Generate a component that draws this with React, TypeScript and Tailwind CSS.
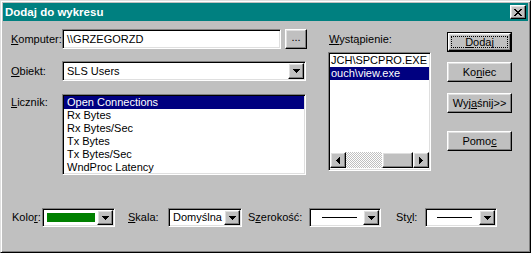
import React from "react";

const sunken =
	"border border-t-[#808080] border-l-[#808080] border-r-white border-b-white shadow-[inset_1px_1px_0_#000,inset_-1px_-1px_0_#dfdfdf]";
const raised =
	"border border-t-white border-l-white border-r-black border-b-black shadow-[inset_-1px_-1px_0_#808080,inset_1px_1px_0_#dfdfdf]";

function DownArrow() {
	return (
		<svg width="7" height="4" viewBox="0 0 7 4" shapeRendering="crispEdges">
			<path d="M0 0h7v1h-1v1h-1v1h-1v1h-1v-1h-1v-1h-1v-1h-1z" fill="#000" />
		</svg>
	);
}

function LeftArrow() {
	return (
		<svg width="4" height="7" viewBox="0 0 4 7" shapeRendering="crispEdges">
			<path d="M0 3h1v-1h1v-1h1v-1h1v7h-1v-1h-1v-1h-1v-1h-1z" fill="#000" />
		</svg>
	);
}

function RightArrow() {
	return (
		<svg width="4" height="7" viewBox="0 0 4 7" shapeRendering="crispEdges">
			<path d="M0 0h1v1h1v1h1v1h1v1h-1v1h-1v1h-1v1h-1z" fill="#000" />
		</svg>
	);
}

function CloseGlyph() {
	// piksele krzyżyka w stylu Win95
	const rows: [number, number][][] = [
		[[0, 2], [6, 2]],
		[[1, 2], [5, 2]],
		[[2, 4]],
		[[3, 2]],
		[[2, 4]],
		[[1, 2], [5, 2]],
		[[0, 2], [6, 2]],
	];
	return (
		<svg width="8" height="7" viewBox="0 0 8 7" shapeRendering="crispEdges">
			{rows.map((segs, y) =>
				segs.map(([x, w]) => (
					<rect key={`${y}-${x}`} x={x} y={y} width={w} height={1} fill="#000" />
				)),
			)}
		</svg>
	);
}

function Combo({
	className,
	children,
}: {
	className: string;
	children?: React.ReactNode;
}) {
	return (
		<div className={`flex bg-white p-[1px] ${sunken} ${className}`}>
			<div className="flex flex-1 items-center overflow-hidden">{children}</div>
			<div
				className={`flex w-[16px] items-center justify-center bg-[#c0c0c0] ${raised}`}
			>
				<DownArrow />
			</div>
		</div>
	);
}

function Button({ children }: { children: React.ReactNode }) {
	return (
		<button
			type="button"
			className={`flex h-[20px] w-[65px] items-center justify-center bg-[#c0c0c0] ${raised}`}
		>
			{children}
		</button>
	);
}

const counters = [
	"Open Connections",
	"Rx Bytes",
	"Rx Bytes/Sec",
	"Tx Bytes",
	"Tx Bytes/Sec",
	"WndProc Latency",
];

export default function App() {
	return (
		<div className="h-[253px] w-[531px] overflow-hidden border border-t-[#dfdfdf] border-l-[#dfdfdf] border-r-black border-b-black bg-[#c0c0c0] p-[2px] font-['Liberation_Sans',Arial,sans-serif] text-[11px] leading-[13px] text-black shadow-[inset_1px_1px_0_#fff,inset_-1px_-1px_0_#808080]">
			{/* pasek tytułu */}
			<div className="flex h-[18px] items-center justify-between bg-[#008080] pl-[2px] pr-[2px]">
				<span className="text-[11.5px] font-bold text-white">Dodaj do wykresu</span>
				<div
					className={`flex h-[14px] w-[16px] items-center justify-center bg-[#c0c0c0] ${raised}`}
				>
					<CloseGlyph />
				</div>
			</div>

			<div className="flex">
				{/* lewa kolumna */}
				<div className="flex w-[304px] shrink-0 flex-col pl-[8px] pt-[8px]">
					<div className="flex h-[20px] items-center">
						<span className="w-[51px]">
							<u>K</u>omputer:
						</span>
						<div className={`flex h-[20px] w-[219px] items-center bg-white pl-[4px] ${sunken}`}>
							\\GRZEGORZD
						</div>
						<button
							type="button"
							className={`ml-[4px] flex h-[20px] w-[22px] items-center justify-center bg-[#c0c0c0] pb-[3px] ${raised}`}
						>
							...
						</button>
					</div>

					<div className="mt-[12px] flex h-[20px] items-center">
						<span className="w-[51px]">
							<u>O</u>biekt:
						</span>
						<Combo className="h-[20px] w-[244px]">
							<span className="pl-[3px]">SLS Users</span>
						</Combo>
					</div>

					<div className="mt-[13px] flex items-start">
						<span className="w-[51px] pt-[2px]">
							<u>L</u>icznik:
						</span>
						<div className={`h-[81px] w-[244px] bg-white p-[1px] ${sunken}`}>
							{counters.map((c, i) => (
								<div
									key={c}
									className={`h-[13px] pl-[3px] ${i === 0 ? "bg-[#000080] text-white" : ""}`}
								>
									{c}
								</div>
							))}
						</div>
					</div>
				</div>

				{/* środkowa kolumna */}
				<div className="ml-[21px] flex flex-col pt-[12px]">
					<span className="pl-[1px]">
						<u>W</u>ystąpienie:
					</span>
					<div className={`mt-[6px] flex h-[119px] w-[103px] flex-col bg-white p-[1px] ${sunken}`}>
						<div className="flex-1 overflow-hidden whitespace-nowrap">
							<div className="h-[13px] pl-[1px]">JCH\SPCPRO.EXE</div>
							<div className="h-[13px] bg-[#000080] pl-[1px] text-white">ouch\view.exe</div>
						</div>
						<div className="mb-[1px] flex h-[16px]">
							<div className={`flex w-[16px] items-center justify-center bg-[#c0c0c0] ${raised}`}>
								<LeftArrow />
							</div>
							<div className="w-[36px] bg-[repeating-conic-gradient(#fff_0%_25%,#c0c0c0_0%_50%)] bg-[length:2px_2px]" />
							<div className={`flex-1 bg-[#c0c0c0] ${raised}`} />
							<div className={`flex w-[16px] items-center justify-center bg-[#c0c0c0] ${raised}`}>
								<RightArrow />
							</div>
						</div>
					</div>
				</div>

				{/* przyciski */}
				<div className="ml-[16px] flex flex-col pt-[11px]">
					<button
						type="button"
						className="h-[20px] w-[65px] border border-black bg-[#c0c0c0]"
					>
						<div className={`flex h-full w-full p-[2px] ${raised}`}>
							<div className="flex flex-1 items-center justify-center border border-dotted border-black">
								<span>
									<u>D</u>odaj
								</span>
							</div>
						</div>
					</button>
					<div className="mt-[10px]">
						<Button>
							Ko<u>n</u>iec
						</Button>
					</div>
					<div className="mt-[11px]">
						<Button>
							Wyj<u>a</u>śnij&gt;&gt;
						</Button>
					</div>
					<div className="mt-[18px]">
						<Button>
							Pomo<u>c</u>
						</Button>
					</div>
				</div>
			</div>

			{/* dolny wiersz */}
			<div className="mt-[33px] flex items-center pl-[9px]">
				<span className="w-[30px]">
					Kolo<u>r</u>:
				</span>
				<Combo className="h-[19px] w-[73px]">
					<div className="ml-[3px] h-[9px] w-[48px] bg-[#008000]" />
				</Combo>

				<span className="ml-[13px] w-[40px]">
					<u>S</u>kala:
				</span>
				<Combo className="h-[19px] w-[74px]">
					<span className="pl-[3px]">Domyślna</span>
				</Combo>

				<span className="ml-[6px] w-[61px]">
					S<u>z</u>erokość:
				</span>
				<Combo className="h-[19px] w-[72px]">
					<div className="ml-[11px] h-[1px] w-[35px] bg-black" />
				</Combo>

				<span className="ml-[15px] w-[29px]">
					St<u>y</u>l:
				</span>
				<Combo className="h-[19px] w-[72px]">
					<div className="ml-[10px] h-[1px] w-[35px] bg-black" />
				</Combo>
			</div>
		</div>
	);
}
